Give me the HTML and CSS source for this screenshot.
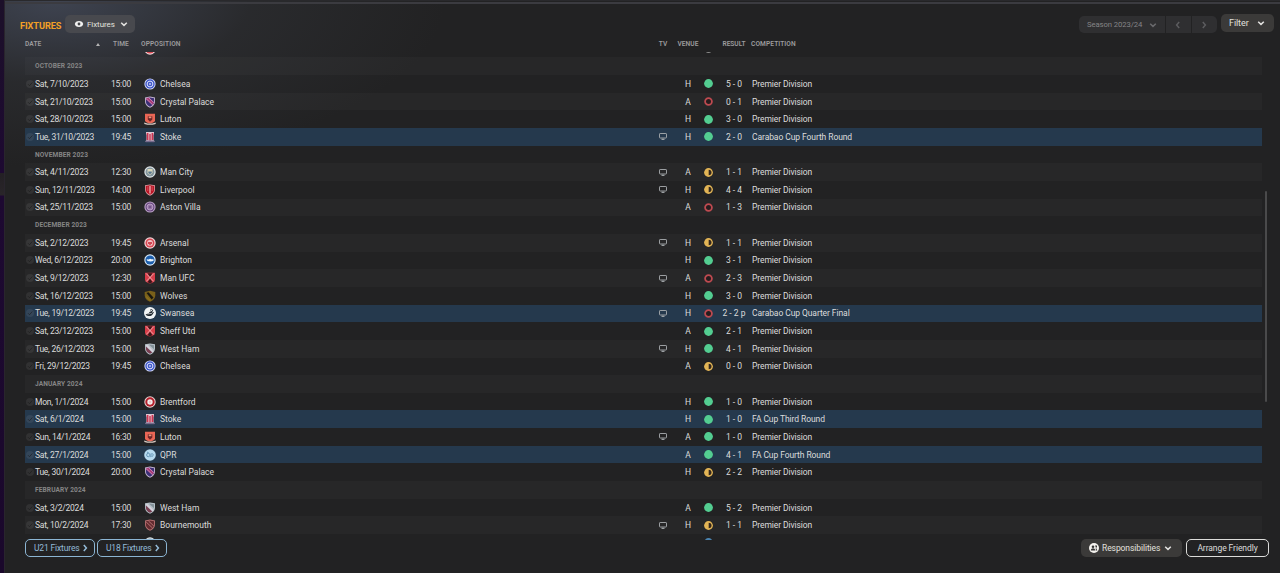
FILE: index.html
```html
<!DOCTYPE html>
<html lang="en">
<head>
  <meta charset="UTF-8">
  <meta name="viewport" content="width=device-width, initial-scale=1.0">
  <title>Fixtures</title>
  <link rel="stylesheet" href="styles.css">
</head>
<body>

<!-- club crests and icons -->
<svg class="defs" width="0" height="0">
  <symbol id="chevron" viewBox="0 0 8 8"><path d="M1.2 2.7 4 5.4 6.8 2.7" fill="none" stroke="currentColor" stroke-width="1.5"/></symbol>
  <symbol id="arrow" viewBox="0 0 8 8"><path d="M2.8 1 5.4 4 2.8 7" fill="none" stroke="currentColor" stroke-width="1.5"/></symbol>
  <symbol id="eye" viewBox="0 0 10 8"><path d="M5 1C2.7 1 1.1 2.2.8 4c.3 1.8 1.9 3 4.200 3s3.900-1.200 4.200-3C8.900 2.200 7.300 1 5 1z" fill="#f1f1f1"/><circle cx="5" cy="4" r="1.4" fill="#444549"/></symbol>
  <symbol id="tick" viewBox="0 0 8 8"><circle cx="4" cy="4" r="4" fill="#fff" opacity=".07"/><path d="M2 4.200 3.500 5.700 6.300 2.500" fill="none" stroke="#181818" stroke-width="1" opacity=".55"/></symbol>
  <symbol id="tv" viewBox="0 0 8 7"><rect x=".5" y=".5" width="7" height="4.500" rx=".6" fill="none" stroke="#a9adb0" stroke-width=".9"/><path d="M2.500 6.300h3" stroke="#a9adb0" stroke-width="1.200"/></symbol>

  <symbol id="win" viewBox="0 0 9 9"><circle cx="4.500" cy="4.500" r="4.400" fill="#53cd91"/></symbol>
  <symbol id="loss" viewBox="0 0 9 9"><circle cx="4.500" cy="4.500" r="3.400" fill="#271c1e" stroke="#bd4a50" stroke-width="1.800"/></symbol>
  <symbol id="draw" viewBox="0 0 9 9"><circle cx="4.500" cy="4.500" r="4.400" fill="#e2b455"/><path d="M4.700 1.700a2.800 2.800 0 0 1 0 5.600z" fill="#33271e"/></symbol>
  <symbol id="past" viewBox="0 0 9 9"><circle cx="4.500" cy="4.500" r="4.400" fill="#8c8c8c"/></symbol>
  <symbol id="next" viewBox="0 0 9 9"><circle cx="4.500" cy="4.500" r="4.400" fill="#4a83b0"/></symbol>

  <symbol id="chelsea" viewBox="0 0 12 12"><circle cx="6" cy="6" r="5.600" fill="#d6dcfa"/><circle cx="6" cy="6" r="4.700" fill="#4058c8"/><circle cx="6" cy="6" r="2.900" fill="none" stroke="#dde1fb" stroke-width="1"/><circle cx="6" cy="6" r="1" fill="#c3cbf5"/></symbol>
  <symbol id="palace" viewBox="0 0 12 12"><path d="M1 1.500 6 .5l5 1v4c0 3-2 5-5 6.200C3 10.500 1 8.500 1 5.500z" fill="#c4b5d0"/><path d="M1.900 2.200 6 1.400l4.100.8v3.300c0 2.500-1.600 4.100-4.100 5.200C3.500 9.600 1.900 8 1.900 5.500z" fill="#3d3077"/><path d="M2 2.200 5 1.600l5 5-1.600 2.300L2 3.500z" fill="#a83a78"/><path d="m2 2.500 7 6.700M4.500 1.600l5.400 5.100" stroke="#dcb7d5" stroke-width=".6"/></symbol>
  <symbol id="luton" viewBox="0 0 12 12"><path d="M1 .8h10v6.500c0 1.800-2 2.500-5 3.300-3-.8-5-1.500-5-3.300z" fill="#e96655"/><path d="M3.800 3.200h4.500v3.300L6 8.700 3.800 6.500z" fill="#6d2427"/><path d="M4.700 3.500h2.700v1.700H4.700z" fill="#e99379"/><path d="M.3 9.600 3.500 10.500h5l3.200-.9v1.500l-3 .7H3.300l-3-.7z" fill="#dacbc4"/></symbol>
  <symbol id="stoke" viewBox="0 0 12 12"><path d="M2 1h8v2l-.5 1v4.500l1 2.500H1.500l1-2.500V4L2 3z" fill="#dfc5d0"/><path d="M2.700 2h1.700v7H2.700zM5.300 3h1.400v6.500H5.300zM7.600 2h1.700v7H7.600z" fill="#cb3350"/><path d="M1.600 9.500h8.800v1.700H1.600z" fill="#776b8d"/></symbol>
  <symbol id="city" viewBox="0 0 12 12"><circle cx="6" cy="6" r="5.700" fill="#e1e7e9"/><circle cx="6" cy="6" r="4.500" fill="#83959d"/><path d="M3.500 3h5v3.800L6 9 3.500 6.800z" fill="#d9d6bb"/><path d="M4.300 5.500h3.500v1.300L6 8.200 4.300 6.800z" fill="#587891"/></symbol>
  <symbol id="liverpool" viewBox="0 0 12 12"><path d="M1 1.200 6 .4l5 .8v4.300c0 3-2 5-5 6.200C3 10.500 1 8.500 1 5.500z" fill="#d5999d"/><path d="m1.800 2 4.200-.8 4.200.8v3.500c0 2.500-1.700 4.200-4.200 5.200-2.500-1-4.200-2.700-4.200-5.200z" fill="#ba1425"/><path d="M6 2v7.500" stroke="#f3d3d3" stroke-width="1.100"/><path d="M3.800 2.500v4.500M8.200 2.500v4.500" stroke="#e08b90" stroke-width=".5"/></symbol>
  <symbol id="villa" viewBox="0 0 12 12"><circle cx="6" cy="6" r="5.600" fill="#b9a0c5"/><circle cx="6" cy="6" r="4.500" fill="#68477f"/><circle cx="6" cy="6" r="3" fill="#9878a7" stroke="#cbb5d5" stroke-width=".7"/><circle cx="6" cy="6" r="1.300" fill="#74558a"/></symbol>
  <symbol id="arsenal" viewBox="0 0 12 12"><circle cx="6" cy="6" r="5.700" fill="#f3d7da"/><circle cx="6" cy="6" r="4.500" fill="#d94853"/><circle cx="6" cy="6" r="2.900" fill="#f0c1c5"/><path d="M4 5h4v2H6.800v1.200H5.200V7H4z" fill="#cf4753"/></symbol>
  <symbol id="brighton" viewBox="0 0 12 12"><circle cx="6" cy="6" r="5.700" fill="#dcecf9"/><circle cx="6" cy="6" r="4.600" fill="#1c5eac"/><path d="m2.600 5.300 2.200.2L6 4.700l1.500.6h2V7L6.600 7.600 3.500 7z" fill="#eff7fb"/></symbol>
  <symbol id="crossed" viewBox="0 0 12 12"><path d="M1 .8h10v7c0 2-2 3-5 3.800C3 10.800 1 9.800 1 7.800z" fill="#d83d49"/><path d="M3.500 1.200h5L6 5zM3.500 10.200 6 6.800l2.500 3.400L6 11.200z" fill="#3c171b"/><path d="m2.200 1.500 7.600 8M9.800 1.500l-7.600 8" stroke="#f3c3c3" stroke-width=".8"/></symbol>
  <symbol id="wolves" viewBox="0 0 12 12"><path d="M.7 2 6 .7 11.300 2v3.500C11.300 8.500 9 10.500 6 11.700 3 10.500.7 8.500.7 5.500z" fill="#79601a"/><path d="M2.500 3 4.500 2.300 9.500 7.500 7.700 9.600z" fill="#19160f"/><path d="m2 5.700 5 4.500L6 11 2.500 8z" fill="#8d701e"/></symbol>
  <symbol id="swansea" viewBox="0 0 12 12"><circle cx="6" cy="6" r="6" fill="#f2f4f5"/><path d="M1.500 7.500c2 2 5.500 2 7 0l1.700-2.700L8 5.700l.8-2.200L5.500 5 4.800 6.300z" fill="#22292f"/><path d="M6 3.500c1.200-1.700 3.300-.8 2.300.6" fill="none" stroke="#22292f" stroke-width="1"/><path d="M3.500 7 8 6.300" stroke="#f2f4f5" stroke-width=".7"/></symbol>
  <symbol id="westham" viewBox="0 0 12 12"><path d="M1 1.300 6 .5l5 .8v4.200c0 3-2 5-5 6.200C3 10.500 1 8.500 1 5.500z" fill="#b4bfc6"/><path d="M1.900 3.500 8.300 9.500 6 10.700C3.500 9.700 1.900 8 1.900 5.500z" fill="#783d50"/><path d="m5 1.700 5 4.600V2.200L6 1.500z" fill="#849198"/><path d="m2.500 2.200 6.600 6.600" stroke="#d9d2dd" stroke-width="1.600"/></symbol>
  <symbol id="brentford" viewBox="0 0 12 12"><circle cx="6" cy="6" r="5.700" fill="#e9d6d5"/><circle cx="6" cy="6" r="4.700" fill="#b4202b"/><circle cx="6" cy="6" r="2.700" fill="#f5ecec"/><circle cx="6" cy="6" r="1.200" fill="#efc6c6"/></symbol>
  <symbol id="qpr" viewBox="0 0 12 12"><circle cx="6" cy="6" r="5.800" fill="#b7daef"/><circle cx="4.300" cy="6" r="1.700" fill="none" stroke="#5386aa" stroke-width=".8"/><path d="M6.200 8.200c1-1 1-2.800.8-3.700M7.700 4.500c2 0 2 3-.2 3M3 3.200l1.500.3" fill="none" stroke="#5386aa" stroke-width=".8"/></symbol>
  <symbol id="bournemouth" viewBox="0 0 12 12"><path d="M1 1.500 6 .5l5 1v4c0 3-2 5-5 6.200C3 10.500 1 8.500 1 5.500z" fill="#b66f70"/><path d="m1.900 2.200 4.100-.8 4.100.8v3.300c0 2.500-1.600 4.100-4.100 5.200-2.500-1.100-4.100-2.700-4.100-5.200z" fill="#642b30"/><path d="m2.200 3 6.300 6M4.500 2l5.300 5" stroke="#c98483" stroke-width=".8"/></symbol>
  <symbol id="staff" viewBox="0 0 10 10"><circle cx="5" cy="5" r="5" fill="#f5f3ef"/><circle cx="4" cy="3.700" r="1.300" fill="#343434"/><path d="M1.800 7.500c.2-3 4.200-3 4.500 0zM6 2.500h2v2H6.800v3h1.500" fill="#343434"/></symbol>
</svg>

<div class="sidebar"></div>
<div class="panel">
  <div class="toolbar">
    <h1>FIXTURES</h1>
    <button class="btn view-btn"><svg class="eye"><use href="#eye"/></svg>Fixtures<svg class="ico"><use href="#chevron"/></svg></button>
    <div class="season">
      <button class="season-name">Season 2023/24<svg class="ico"><use href="#chevron"/></svg></button>
      <button class="season-step"><svg class="ico flip"><use href="#arrow"/></svg></button>
      <button class="season-step"><svg class="ico"><use href="#arrow"/></svg></button>
    </div>
    <button class="btn filter-btn">Filter<svg class="ico"><use href="#chevron"/></svg></button>
  </div>

  <div class="row head">
    <span class="head-date">DATE <i class="sort"></i></span>
    <span class="time">TIME</span>
    <span class="head-opp">OPPOSITION</span>
    <span class="tv">TV</span>
    <span class="venue">VENUE</span>
    <span></span>
    <span class="result">RESULT</span>
    <span class="head-comp">COMPETITION</span>
  </div>

  <div class="list-wrap">
    <div class="list">
      <div class="rows" id="rows"></div>
    </div>
    <div class="scroll"><div class="thumb"></div></div>
  </div>

  <div class="footer">
    <button class="link-btn">U21 Fixtures<svg class="ico"><use href="#arrow"/></svg></button>
    <button class="link-btn">U18 Fixtures<svg class="ico"><use href="#arrow"/></svg></button>
    <button class="btn resp-btn"><svg class="staff"><use href="#staff"/></svg>Responsibilities<svg class="ico"><use href="#chevron"/></svg></button>
    <button class="arrange-btn">Arrange Friendly</button>
  </div>
</div>

<script>
  const PD = 'Premier Division';

  // date, time, crest, opposition, on tv, venue, outcome, result, competition
  const fixtures = [
    ['', '', 'arsenal', '', 0, '', 'past', '', ''],
    'OCTOBER 2023',
    ['Sat, 7/10/2023', '15:00', 'chelsea', 'Chelsea', 0, 'H', 'win', '5 - 0', PD],
    ['Sat, 21/10/2023', '15:00', 'palace', 'Crystal Palace', 0, 'A', 'loss', '0 - 1', PD],
    ['Sat, 28/10/2023', '15:00', 'luton', 'Luton', 0, 'H', 'win', '3 - 0', PD],
    ['Tue, 31/10/2023', '19:45', 'stoke', 'Stoke', 1, 'H', 'win', '2 - 0', 'Carabao Cup Fourth Round'],
    'NOVEMBER 2023',
    ['Sat, 4/11/2023', '12:30', 'city', 'Man City', 1, 'A', 'draw', '1 - 1', PD],
    ['Sun, 12/11/2023', '14:00', 'liverpool', 'Liverpool', 1, 'H', 'draw', '4 - 4', PD],
    ['Sat, 25/11/2023', '15:00', 'villa', 'Aston Villa', 0, 'A', 'loss', '1 - 3', PD],
    'DECEMBER 2023',
    ['Sat, 2/12/2023', '19:45', 'arsenal', 'Arsenal', 1, 'H', 'draw', '1 - 1', PD],
    ['Wed, 6/12/2023', '20:00', 'brighton', 'Brighton', 0, 'H', 'win', '3 - 1', PD],
    ['Sat, 9/12/2023', '12:30', 'crossed', 'Man UFC', 1, 'A', 'loss', '2 - 3', PD],
    ['Sat, 16/12/2023', '15:00', 'wolves', 'Wolves', 0, 'H', 'win', '3 - 0', PD],
    ['Tue, 19/12/2023', '19:45', 'swansea', 'Swansea', 1, 'H', 'loss', '2 - 2 p', 'Carabao Cup Quarter Final'],
    ['Sat, 23/12/2023', '15:00', 'crossed', 'Sheff Utd', 0, 'A', 'win', '2 - 1', PD],
    ['Tue, 26/12/2023', '15:00', 'westham', 'West Ham', 1, 'H', 'win', '4 - 1', PD],
    ['Fri, 29/12/2023', '19:45', 'chelsea', 'Chelsea', 0, 'A', 'draw', '0 - 0', PD],
    'JANUARY 2024',
    ['Mon, 1/1/2024', '15:00', 'brentford', 'Brentford', 0, 'H', 'win', '1 - 0', PD],
    ['Sat, 6/1/2024', '15:00', 'stoke', 'Stoke', 0, 'H', 'win', '1 - 0', 'FA Cup Third Round'],
    ['Sun, 14/1/2024', '16:30', 'luton', 'Luton', 1, 'A', 'win', '1 - 0', PD],
    ['Sat, 27/1/2024', '15:00', 'qpr', 'QPR', 0, 'A', 'win', '4 - 1', 'FA Cup Fourth Round'],
    ['Tue, 30/1/2024', '20:00', 'palace', 'Crystal Palace', 0, 'H', 'draw', '2 - 2', PD],
    'FEBRUARY 2024',
    ['Sat, 3/2/2024', '15:00', 'westham', 'West Ham', 0, 'A', 'win', '5 - 2', PD],
    ['Sat, 10/2/2024', '17:30', 'bournemouth', 'Bournemouth', 1, 'H', 'draw', '1 - 1', PD],
    ['', '', 'city', '', 0, '', 'next', '', '']
  ];

  const icon = (name, cls) => `<svg class="${cls}"><use href="#${name}"/></svg>`;

  document.getElementById('rows').innerHTML = fixtures.map(f => {
    if (typeof f === 'string') return `<div class="row month">${f}</div>`;
    const [date, time, crest, opp, tv, venue, outcome, result, comp] = f;
    return `<div class="row ${comp.includes('Cup') ? 'cup' : ''}">
      <span class="check">${date ? icon('tick', 'tick') : ''}</span>
      <span class="date">${date}</span>
      <span class="time">${time}</span>
      <span class="crest">${icon(crest, 'badge')}</span>
      <span class="opp">${opp}</span>
      <span class="tv">${tv ? icon('tv', 'tv-icon') : ''}</span>
      <span class="venue">${venue}</span>
      <span class="outcome">${icon(outcome, 'dot')}</span>
      <span class="result">${result}</span>
      <span class="comp">${comp}</span>
    </div>`;
  }).join('');
</script>

</body>
</html>
```
FILE: styles.css
```css
* {
  box-sizing: border-box;
}
body {
  margin: 0;
  height: 573px;
  overflow: hidden;
  display: flex;
  background: #222223;
  color: #dcdcdc;
  font-family: Roboto, "Liberation Sans", sans-serif;
  font-size: 8.5px;
  letter-spacing: -0.08px;
}
button {
  font: inherit;
  letter-spacing: inherit;
  color: inherit;
  border: none;
  padding: 0;
  background: none;
  display: flex;
  align-items: center;
  white-space: nowrap;
}
svg {
  display: block;
  flex: none;
}
.defs {
  position: absolute;
}
.ico {
  width: 8px;
  height: 8px;
}
.flip {
  transform: scaleX(-1);
}
.sidebar {
  width: 5px;
  background: linear-gradient(#1c1029, #1d0931 173px, #232024 173px, #292529 195px, #1d0931 196px, #1a082b);
  border-right: 1px solid #29252d;
}
.panel {
  flex: 1;
  display: flex;
  flex-direction: column;
  border-top: 1px solid #29292c;
  background:
    linear-gradient(#3b3b40, #3b3b40) 0 1px / 100% 2px no-repeat,
    radial-gradient(ellipse 390px 165px at 50px 0, rgba(67, 73, 88, 0.85), rgba(50, 52, 57, 0.45) 50%, rgba(34, 34, 35, 0)),
    #222223;
}

/* toolbar */
.toolbar {
  height: 37px;
  padding: 13px 6px 0 15px;
  display: flex;
  align-items: flex-start;
}
h1 {
  margin: 5px 3px 0 0;
  width: 42px;
  font-size: 9.2px;
  line-height: 13px;
  letter-spacing: -0.1px;
  color: #f2a026;
}
.btn {
  height: 18px;
  border-radius: 5px;
  background: #3b3a39;
  color: #e2e1df;
}
.view-btn {
  width: 70px;
  margin-top: 1px;
  padding-left: 9px;
  font-size: 8px;
  background: #48494e;
}
.eye {
  width: 10px;
  height: 8px;
  margin-right: 3px;
}
.view-btn .ico {
  margin-left: 5px;
}
.season {
  margin-left: auto;
  margin-top: 2px;
  display: flex;
  gap: 1px;
  height: 17px;
  border-radius: 5px;
  overflow: hidden;
  color: #858587;
  font-size: 7.7px;
}
.season button {
  background: #2f2f31;
}
.season-name {
  width: 86px;
  padding-left: 8px;
  gap: 7px;
}
.season .season-step {
  width: 25px;
  justify-content: center;
  padding-right: 2px;
  color: #5c5c5f;
}
.season-name .ico {
  color: #69696c;
}
.filter-btn {
  width: 53px;
  margin-left: 4px;
  padding-left: 8px;
  gap: 8px;
  font-size: 9px;
}

/* table */
.row {
  display: grid;
  grid-template-columns: 10px 72px 28px 25px 490px 26px 24px 17px 34px 1fr;
  align-items: center;
  height: 17.667px;
  white-space: nowrap;
}
.row:nth-child(even) {
  background: rgba(255, 255, 255, 0.022);
}
.row.month {
  display: block;
  padding-left: 10px;
  font-size: 6.6px;
  font-weight: 700;
  letter-spacing: 0.1px;
  line-height: 19.5px;
  color: #858585;
}
.rows .row.cup {
  background: #25394d;
}
.row.head {
  height: 12px;
  margin: 0 18px 2px 20px;
  font-size: 6.6px;
  font-weight: 600;
  letter-spacing: 0.1px;
  color: #9c9c9e;
  background: none;
}
.head-date {
  grid-column: span 2;
  display: flex;
  align-items: center;
  justify-content: space-between;
  padding-right: 7px;
}
.sort {
  border: 2px solid transparent;
  border-top: none;
  border-bottom: 3px solid #b5b5b5;
}
.head-opp {
  grid-column: span 2;
  padding-left: 6px;
}
.date,
.rows .time {
  letter-spacing: -0.25px;
}
.time,
.tv,
.venue,
.outcome,
.result {
  display: flex;
  justify-content: center;
}
.result {
  letter-spacing: 0;
}
.crest {
  display: flex;
  justify-content: center;
  padding-left: 4px;
}
.badge {
  width: 12px;
  height: 12px;
}
.opp {
  letter-spacing: 0;
}
.tick {
  width: 8px;
  height: 8px;
  margin-left: 1px;
}
.tv-icon {
  width: 8px;
  height: 7px;
}
.dot {
  width: 9px;
  height: 9px;
}
.comp {
  padding-left: 1px;
}
.list-wrap {
  height: 488px;
  margin-left: 20px;
  display: flex;
}
.list {
  width: 1237px;
  overflow: hidden;
}
.rows {
  margin-top: -12.3px;
}
.scroll {
  padding: 139px 0 0 3px;
}
.thumb {
  width: 2px;
  height: 211px;
  border-radius: 1px;
  background: #4a4a4b;
}

/* footer */
.footer {
  display: flex;
  margin-top: -1px;
  padding: 0 11px 0 20px;
}
.link-btn {
  width: 70px;
  height: 18px;
  margin-right: 2px;
  padding-left: 8px;
  border: 1px solid #8cb5d3;
  border-radius: 5px;
  color: #94bbd8;
  letter-spacing: -0.15px;
}
.link-btn .ico {
  margin-left: 1px;
}
.resp-btn {
  width: 101px;
  margin-left: auto;
  padding-left: 8px;
}
.staff {
  width: 10px;
  height: 10px;
  margin-right: 3px;
}
.resp-btn .ico {
  margin-left: 4px;
}
.arrange-btn {
  width: 83px;
  height: 18px;
  margin-left: 4px;
  justify-content: center;
  border: 1.5px solid #dcdcda;
  border-radius: 5px;
}
```
